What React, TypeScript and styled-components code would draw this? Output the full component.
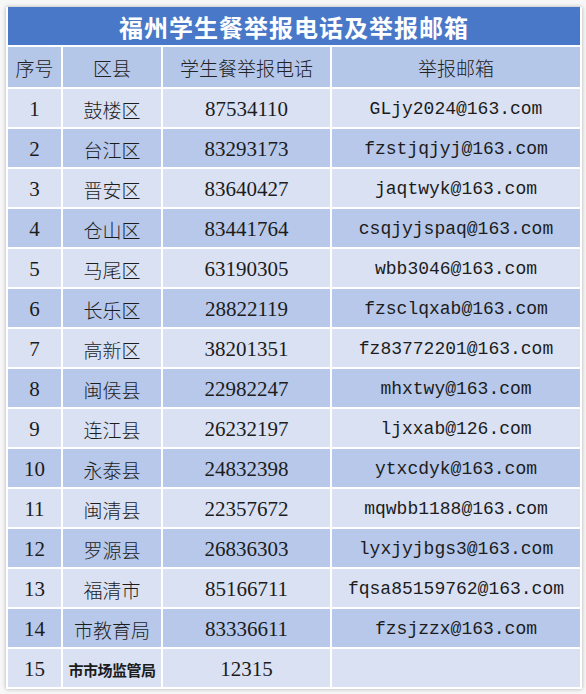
import styled, { createGlobalStyle } from 'styled-components';

const GlobalStyle = createGlobalStyle`
  html, body {
    margin: 0;
    padding: 0;
    background: #f7f7f7;
  }
`;

const Page = styled.div`
  padding: 7px 6px;
  width: 574px;
`;

const Table = styled.table`
  width: 574px;
  table-layout: fixed;
  border-collapse: collapse;
  box-shadow: 0 0 4px rgba(0, 0, 0, 0.3);
  font-family: 'Liberation Serif', 'Noto Sans CJK SC', serif;
  color: #1c1c1c;
`;

const TitleCell = styled.th`
  height: 38px;
  padding: 0;
  background: #4a78c8;
  color: #ffffff;
  font-family: 'Noto Sans CJK SC', sans-serif;
  font-size: 24px;
  font-weight: 700;
  letter-spacing: 1px;
  border: 2px solid #ffffff;
  border-top: none;
  text-align: center;
`;

const HeadCell = styled.th`
  height: 39px;
  padding: 1px 0 0;
  background: #b5c7e9;
  font-family: 'Noto Sans CJK SC', sans-serif;
  font-size: 19px;
  font-weight: 300;
  color: #222;
  border: 2px solid #ffffff;
  text-align: center;
`;

interface ICellProps {
  dark?: boolean;
  kind?: 'num' | 'cjk' | 'mail' | 'small';
}

const Cell = styled.td<ICellProps>`
  height: 36px;
  padding: 2px 0 0;
  text-align: center;
  white-space: nowrap;
  overflow: hidden;
  background: ${({ dark }) => (dark ? '#b7c8ea' : '#dae1f3')};
  border: 2px solid #ffffff;
  font-size: ${({ kind }) =>
    kind === 'mail' ? '18px' : kind === 'small' ? '15px' : kind === 'cjk' ? '19px' : '21px'};
  font-family: ${({ kind }) =>
    kind === 'mail'
      ? "'Liberation Mono', monospace"
      : kind === 'cjk' || kind === 'small'
      ? "'Noto Sans CJK SC', sans-serif"
      : "'Liberation Serif', serif"};
  font-weight: ${({ kind }) => (kind === 'small' ? 700 : kind === 'cjk' ? 300 : 400)};
  letter-spacing: ${({ kind }) => (kind === 'small' ? '-0.5px' : '0')};
`;

const rows: Array<[string, string, string]> = [
  ['鼓楼区', '87534110', 'GLjy2024@163.com'],
  ['台江区', '83293173', 'fzstjqjyj@163.com'],
  ['晋安区', '83640427', 'jaqtwyk@163.com'],
  ['仓山区', '83441764', 'csqjyjspaq@163.com'],
  ['马尾区', '63190305', 'wbb3046@163.com'],
  ['长乐区', '28822119', 'fzsclqxab@163.com'],
  ['高新区', '38201351', 'fz83772201@163.com'],
  ['闽侯县', '22982247', 'mhxtwy@163.com'],
  ['连江县', '26232197', 'ljxxab@126.com'],
  ['永泰县', '24832398', 'ytxcdyk@163.com'],
  ['闽清县', '22357672', 'mqwbb1188@163.com'],
  ['罗源县', '26836303', 'lyxjyjbgs3@163.com'],
  ['福清市', '85166711', 'fqsa85159762@163.com'],
  ['市教育局', '83336611', 'fzsjzzx@163.com'],
  ['市市场监管局', '12315', ''],
];

export default function App() {
  return (
    <Page>
      <GlobalStyle />
      <Table>
        <colgroup>
          <col style={{ width: 55 }} />
          <col style={{ width: 100 }} />
          <col style={{ width: 169 }} />
          <col style={{ width: 250 }} />
        </colgroup>
        <thead>
          <tr>
            <TitleCell colSpan={4}>福州学生餐举报电话及举报邮箱</TitleCell>
          </tr>
          <tr>
            <HeadCell>序号</HeadCell>
            <HeadCell>区县</HeadCell>
            <HeadCell>学生餐举报电话</HeadCell>
            <HeadCell>举报邮箱</HeadCell>
          </tr>
        </thead>
        <tbody>
          {rows.map(([area, phone, mail], idx) => {
            const dark = idx % 2 === 1;
            return (
              <tr key={idx}>
                <Cell dark={dark} kind="num">{idx + 1}</Cell>
                <Cell dark={dark} kind={area.length > 4 ? 'small' : 'cjk'}>{area}</Cell>
                <Cell dark={dark} kind="num">{phone}</Cell>
                <Cell dark={dark} kind="mail">{mail}</Cell>
              </tr>
            );
          })}
        </tbody>
      </Table>
    </Page>
  );
}
